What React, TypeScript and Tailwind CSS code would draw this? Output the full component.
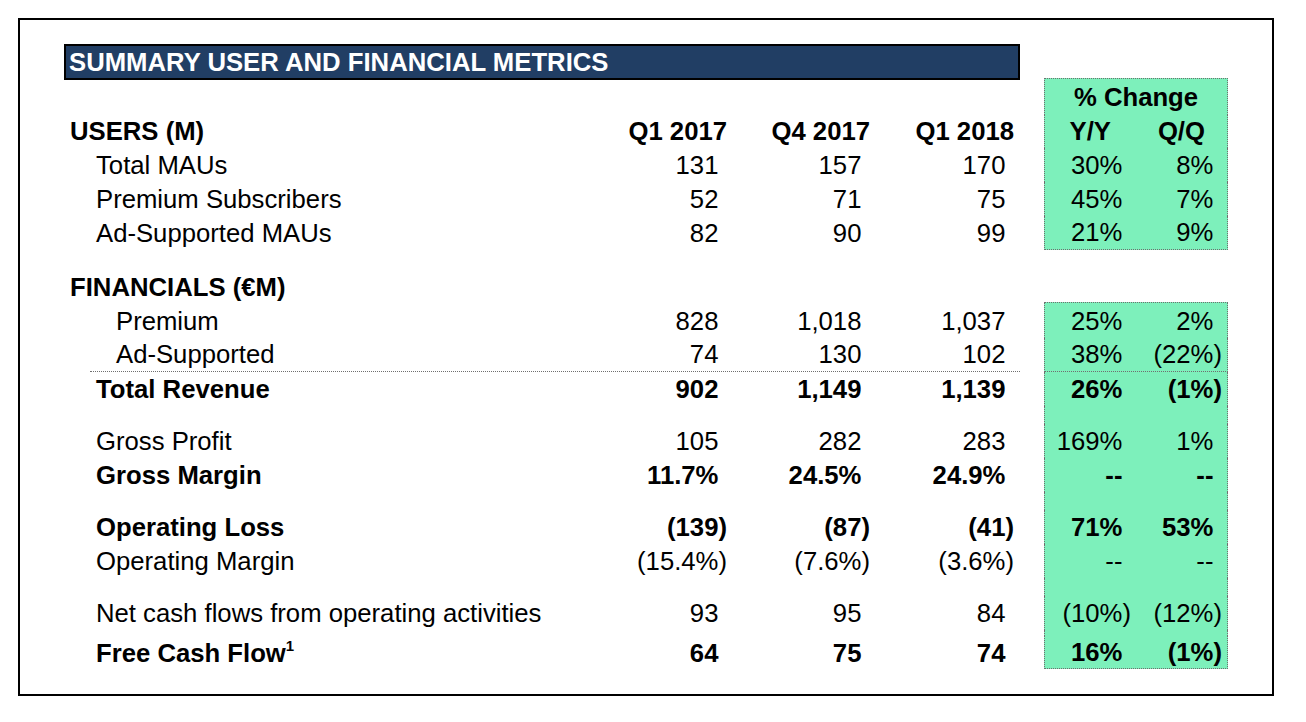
import React from "react";
import clsx from "clsx";

type Green = "none" | "top" | "mid" | "bottom";

interface RowData {
  label?: React.ReactNode;
  indent?: 0 | 1 | 2;
  values?: string[];
  change?: string[];
  bold?: boolean;
  header?: boolean;
  divider?: boolean;
  green: Green;
  row: string; // height / line-height / alignment classes
}

const indentClass = { 0: "pl-[6px]", 1: "pl-[32px]", 2: "pl-[52px]" };
const colWidth = ["w-[143px]", "w-[143px]", "w-[144px]"];

// Accounting-style alignment: closing paren hangs past the digits
function Val({ v, header }: { v: string; header?: boolean }) {
  if (header || v.endsWith(")")) return <>{v}</>;
  return (
    <>
      {v}
      <span className="invisible">)</span>
    </>
  );
}

function GreenCell({
  green,
  divider,
  children,
}: {
  green: Green;
  divider?: boolean;
  children?: React.ReactNode;
}) {
  return (
    <div
      className={clsx(
        "ml-[24px] flex w-[184px] items-end self-stretch",
        green !== "none" && "border-x border-dotted border-[#6f6f6f] bg-[#7df0bb]",
        green === "top" && "border-t",
        (green === "bottom" || divider) && "border-b"
      )}
    >
      {children}
    </div>
  );
}

function Row({ d }: { d: RowData }) {
  const labelCls = d.divider
    ? "w-[494px] pl-[26px]"
    : clsx("w-[520px]", indentClass[d.indent ?? 0]);

  return (
    <div className={clsx("flex", d.row, d.bold && "font-bold")}>
      <div
        className={clsx(
          "flex",
          d.divider
            ? "ml-[26px] w-[930px] border-b border-dotted border-[#6f6f6f]"
            : "w-[956px]"
        )}
      >
        <div className={clsx(labelCls, "whitespace-nowrap")}>{d.label}</div>
        {(d.values ?? ["", "", ""]).map((v, i) => (
          <div key={i} className={clsx(colWidth[i], "text-right whitespace-nowrap")}>
            {v && <Val v={v} header={d.header} />}
          </div>
        ))}
        <div className="w-[6px]" />
      </div>
      <GreenCell green={d.green} divider={d.divider}>
        {d.change && (
          <>
            <div
              className={clsx(
                "w-[86px] text-right whitespace-nowrap",
                d.header && "pr-[20px]"
              )}
            >
              <Val v={d.change[0]} header={d.header} />
            </div>
            <div
              className={clsx(
                "w-[91px] text-right whitespace-nowrap",
                d.header && "pr-[17px]"
              )}
            >
              <Val v={d.change[1]} header={d.header} />
            </div>
          </>
        )}
      </GreenCell>
    </div>
  );
}

function Gap({ h, green }: { h: string; green: boolean }) {
  return (
    <div className={clsx("flex", h)}>
      <div className="w-[956px]" />
      <GreenCell green={green ? "mid" : "none"} />
    </div>
  );
}

const users: RowData[] = [
  {
    label: "USERS (M)",
    bold: true,
    header: true,
    values: ["Q1 2017", "Q4 2017", "Q1 2018"],
    change: ["Y/Y", "Q/Q"],
    green: "mid",
    row: "h-[33px] leading-[33px] items-end",
  },
  { label: "Total MAUs", indent: 1, values: ["131", "157", "170"], change: ["30%", "8%"], green: "mid", row: "h-[34px] leading-[34px] items-end" },
  { label: "Premium Subscribers", indent: 1, values: ["52", "71", "75"], change: ["45%", "7%"], green: "mid", row: "h-[34px] leading-[34px] items-end" },
  { label: "Ad-Supported MAUs", indent: 1, values: ["82", "90", "99"], change: ["21%", "9%"], green: "bottom", row: "h-[34px] leading-[33px] items-end" },
];

const r34 = "h-[34px] leading-[34px] items-end";

export default function App() {
  return (
    <div className="min-h-[722px] bg-white pl-[18px] pt-[18px] font-['Liberation_Sans',Arial,sans-serif] text-[25.7px] text-black">
      <div className="w-[1256px] border-2 border-black pb-[25px] pl-[44px] pt-[24px]">
        {/* Title bar */}
        <div className="h-[36px] w-[956px] border-2 border-black bg-[#213e64] pl-[3px] text-[25.7px] leading-[32px] font-bold whitespace-nowrap text-white">
          SUMMARY USER AND FINANCIAL METRICS
        </div>

        {/* % Change header */}
        <div className="-mt-[2px] flex h-[37px] leading-[36px] font-bold">
          <div className="w-[956px]" />
          <GreenCell green="top">
            <div className="w-full text-center">% Change</div>
          </GreenCell>
        </div>

        {users.map((d, i) => (
          <Row key={i} d={d} />
        ))}

        <Gap h="h-[20px]" green={false} />

        <Row
          d={{
            label: "FINANCIALS (€M)",
            bold: true,
            green: "none",
            row: "h-[32px] leading-[34px] items-start",
          }}
        />
        <Row d={{ label: "Premium", indent: 2, values: ["828", "1,018", "1,037"], change: ["25%", "2%"], green: "top", row: "h-[36px] leading-[34px] items-end" }} />
        <Row d={{ label: "Ad-Supported", indent: 2, divider: true, values: ["74", "130", "102"], change: ["38%", "(22%)"], green: "mid", row: "h-[34px] leading-[33px] items-end" }} />
        <Row d={{ label: "Total Revenue", indent: 1, bold: true, values: ["902", "1,149", "1,139"], change: ["26%", "(1%)"], green: "mid", row: r34 }} />

        <Gap h="h-[18px]" green />

        <Row d={{ label: "Gross Profit", indent: 1, values: ["105", "282", "283"], change: ["169%", "1%"], green: "mid", row: r34 }} />
        <Row d={{ label: "Gross Margin", indent: 1, bold: true, values: ["11.7%", "24.5%", "24.9%"], change: ["--", "--"], green: "mid", row: r34 }} />

        <Gap h="h-[18px]" green />

        <Row d={{ label: "Operating Loss", indent: 1, bold: true, values: ["(139)", "(87)", "(41)"], change: ["71%", "53%"], green: "mid", row: r34 }} />
        <Row d={{ label: "Operating Margin", indent: 1, values: ["(15.4%)", "(7.6%)", "(3.6%)"], change: ["--", "--"], green: "mid", row: r34 }} />

        <Gap h="h-[18px]" green />

        <Row d={{ label: "Net cash flows from operating activities", indent: 1, values: ["93", "95", "84"], change: ["(10%)", "(12%)"], green: "mid", row: r34 }} />

        <Gap h="h-[6px]" green />

        <Row
          d={{
            label: (
              <>
                Free Cash Flow
                <sup className="-top-[11px] text-[15px]">1</sup>
              </>
            ),
            indent: 1,
            bold: true,
            values: ["64", "75", "74"],
            change: ["16%", "(1%)"],
            green: "bottom",
            row: "h-[33px] leading-[32px] items-end",
          }}
        />
      </div>
    </div>
  );
}
